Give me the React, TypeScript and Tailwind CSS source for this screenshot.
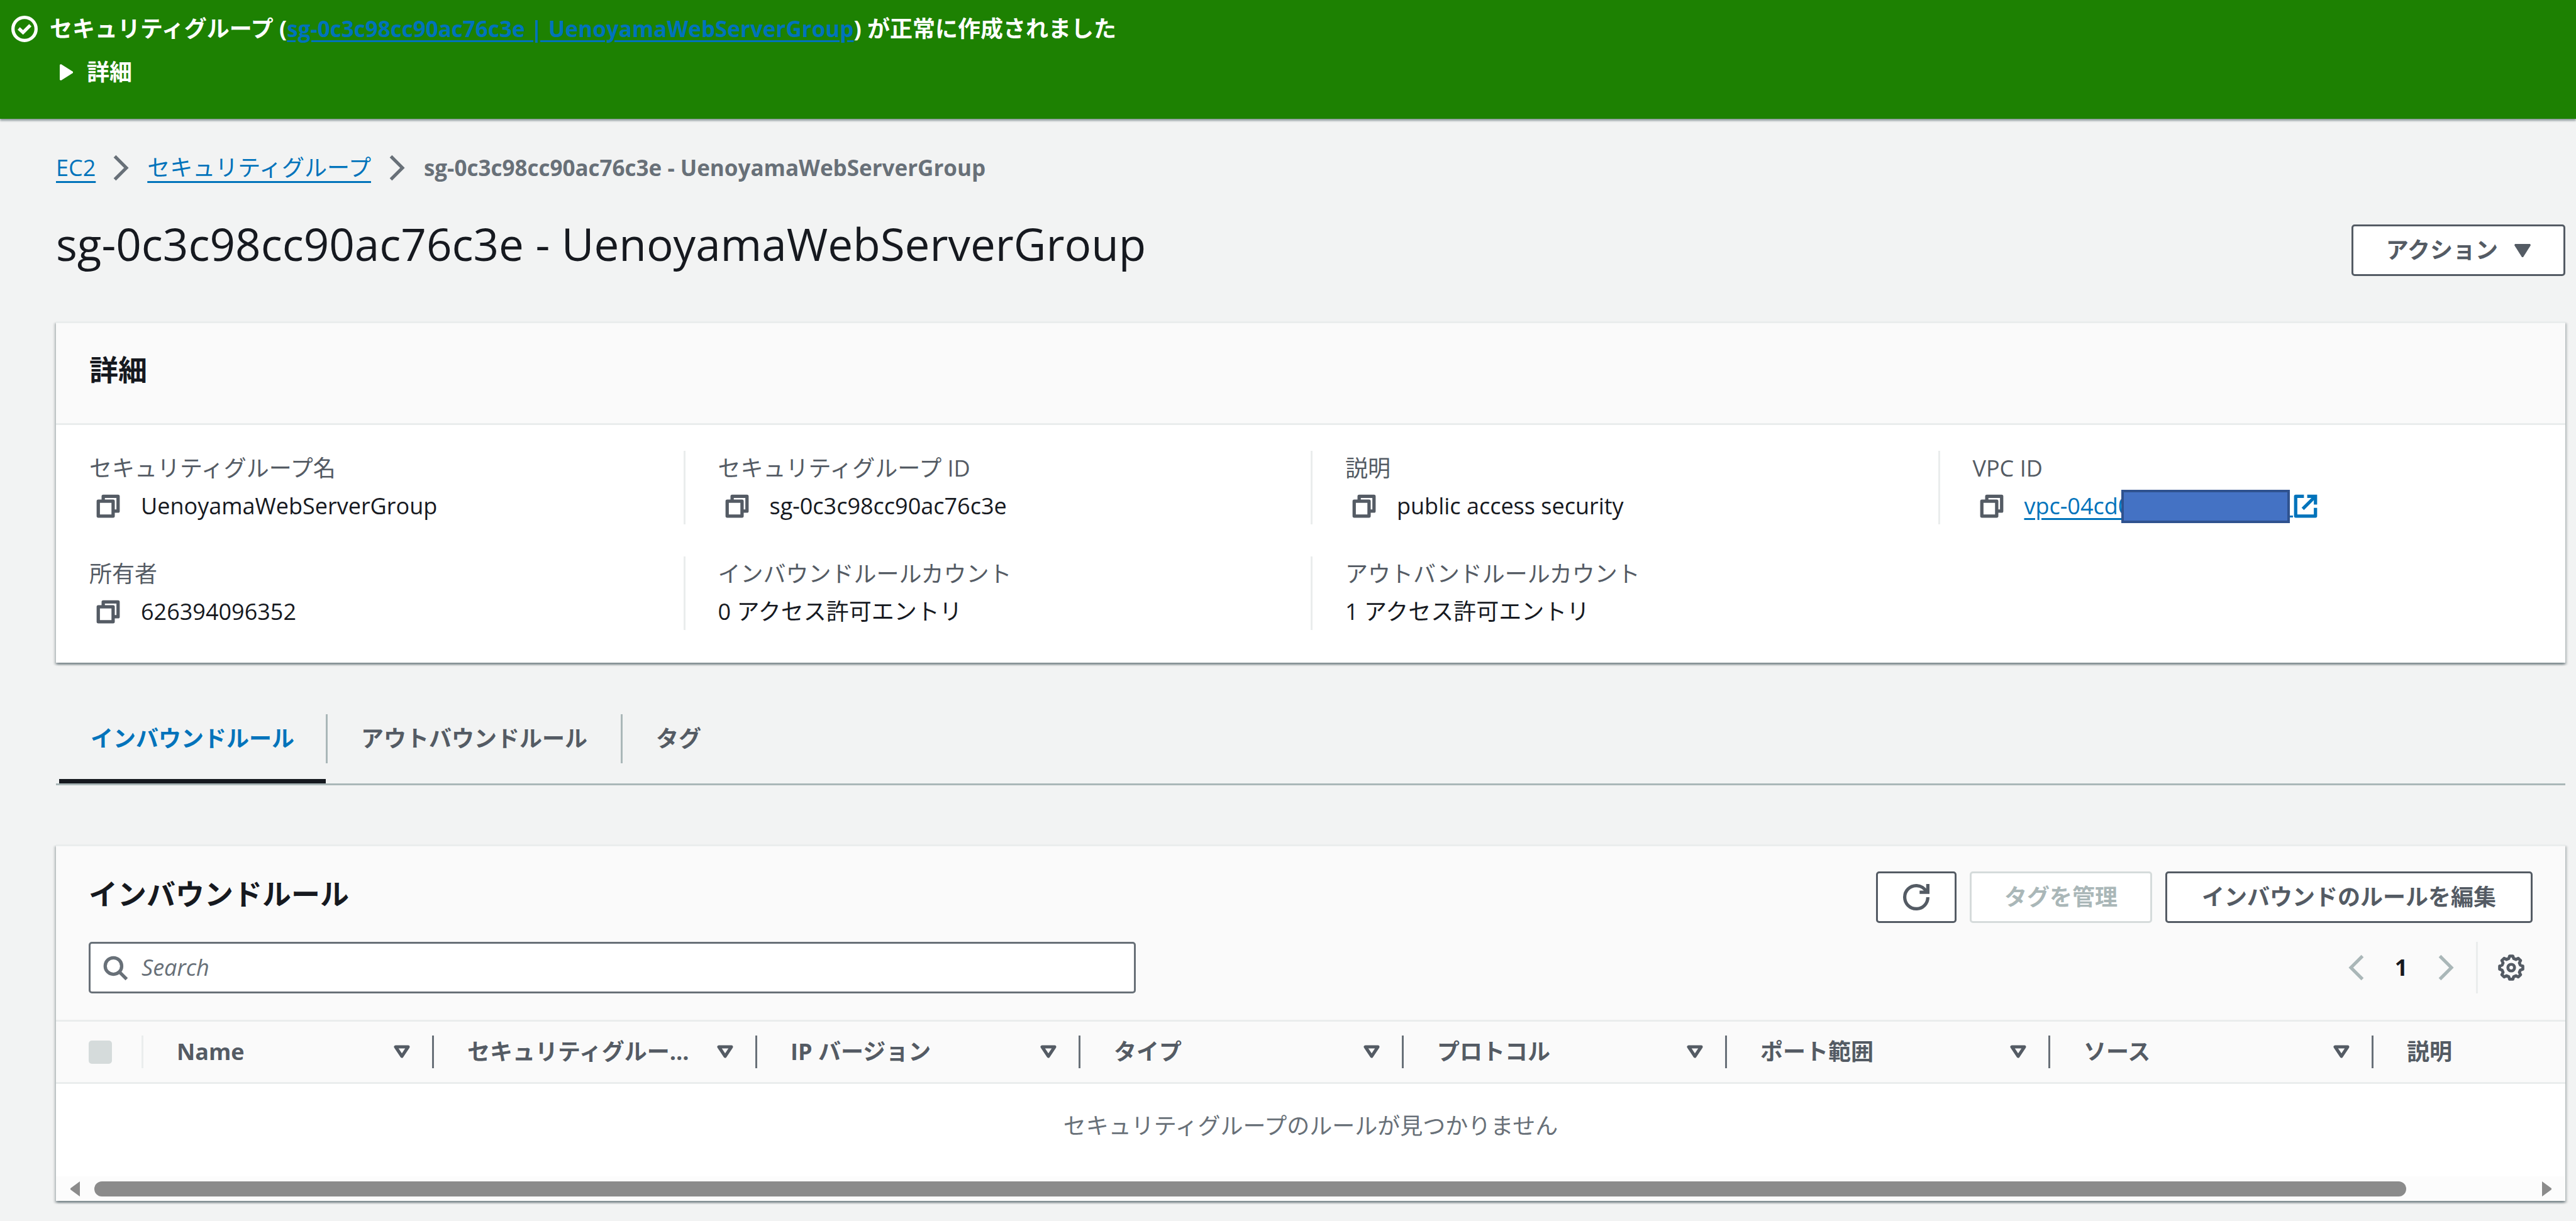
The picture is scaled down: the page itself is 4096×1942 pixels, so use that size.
import type { ReactNode } from "react";

type IconProps = { className?: string };

function StatusCheckIcon({ className = "" }: IconProps) {
  return (
    <svg viewBox="0 0 16 16" className={className} fill="none" stroke="currentColor" strokeWidth="2" aria-hidden="true">
      <circle cx="8" cy="8" r="7" />
      <path d="M4.5 7.7l2.6 2.4 4.4-4.3" />
    </svg>
  );
}

function ChevronIcon({ className = "" }: IconProps) {
  return (
    <svg viewBox="0 0 16 16" className={className} fill="none" stroke="currentColor" strokeWidth="2" aria-hidden="true">
      <path d="M4 1l7 7-7 7" />
    </svg>
  );
}

function CopyIcon({ className = "" }: IconProps) {
  return (
    <svg viewBox="0 0 16 16" className={className} fill="none" stroke="currentColor" strokeWidth="2" strokeLinejoin="round" aria-hidden="true">
      <path d="M2 5h9v9H2z" />
      <path d="M5 5V2h9v9h-3" />
    </svg>
  );
}

function ExternalIcon({ className = "" }: IconProps) {
  return (
    <svg viewBox="0 0 16 16" className={className} fill="none" stroke="currentColor" strokeWidth="2" aria-hidden="true">
      <path d="M9 2h5v5" />
      <path d="M6.3 9.7L14 2" />
      <path d="M14 9v5H2V2h5" strokeLinejoin="round" />
    </svg>
  );
}

function RefreshIcon({ className = "" }: IconProps) {
  return (
    <svg viewBox="0 0 16 16" className={className} fill="none" stroke="currentColor" strokeWidth="2" aria-hidden="true">
      <path d="M10 5h5V0" />
      <path d="M15 8a6.957 6.957 0 01-7 7 6.957 6.957 0 01-7-7 6.957 6.957 0 017-7 6.87 6.87 0 016.3 4" />
    </svg>
  );
}

function SearchIcon({ className = "" }: IconProps) {
  return (
    <svg viewBox="0 0 16 16" className={className} fill="none" stroke="currentColor" strokeWidth="2" aria-hidden="true">
      <circle cx="7" cy="7" r="5" />
      <path d="M15 15l-4.5-4.5" />
    </svg>
  );
}

const gearOutline = Array.from({ length: 8 })
  .flatMap((_, tooth) =>
    [
      [-15, 5.7],
      [-8, 7.1],
      [8, 7.1],
      [15, 5.7],
    ].map(([offset, radius]) => {
      const angle = ((tooth * 45 + offset) * Math.PI) / 180;
      return `${(8 + radius * Math.sin(angle)).toFixed(2)},${(8 - radius * Math.cos(angle)).toFixed(2)}`;
    }),
  )
  .join(" ");

function GearIcon({ className = "" }: IconProps) {
  return (
    <svg viewBox="0 0 16 16" className={className} fill="none" stroke="currentColor" strokeWidth="1.8" strokeLinejoin="round" aria-hidden="true">
      <circle cx="8" cy="8" r="2" />
      <polygon points={gearOutline} />
    </svg>
  );
}

function CaretDown({ className = "" }: IconProps) {
  return (
    <svg viewBox="0 0 26 21" className={className} fill="currentColor" aria-hidden="true">
      <path d="M1 0h24l1 2-12 19h-2L0 2z" />
    </svg>
  );
}

function SortIcon({ className = "" }: IconProps) {
  return (
    <svg viewBox="0 0 28 22" className={className} fill="none" stroke="currentColor" strokeWidth="5" strokeLinejoin="round" aria-hidden="true">
      <path d="M4 3h20L14 18z" />
    </svg>
  );
}

function Field({ label, first, children }: { label: string; first?: boolean; children: ReactNode }) {
  return (
    <div
      className={
        first
          ? "border-l-[3px] border-transparent pl-[50px]"
          : "border-l-[3px] border-[#eaeded] pl-[52px]"
      }
    >
      <dt className="h-[58px] leading-[56px] text-[#545b64]">{label}</dt>
      <dd className="flex h-[59px] items-center whitespace-nowrap">{children}</dd>
    </div>
  );
}

function CopyButton({ label }: { label: string }) {
  return (
    <button type="button" aria-label={label} className="mr-[31px] ml-[9px] text-[#545b64]">
      <CopyIcon className="size-[42px]" />
    </button>
  );
}

const columns = ["Name", "セキュリティグルー...", "IP バージョン", "タイプ", "プロトコル", "ポート範囲", "ソース"];

const panel =
  "border-t-[3px] border-[#eaeded] bg-white shadow-[0_3px_3px_0_rgba(0,28,36,0.3),3px_3px_3px_0_rgba(0,28,36,0.15),-3px_3px_3px_0_rgba(0,28,36,0.15)]";

const button =
  "flex h-[82px] items-center justify-center rounded-[5px] border-[3px] bg-white font-bold whitespace-nowrap";

function HeaderCell({ label }: { label: string }) {
  return (
    <th scope="col" className="p-0 text-left font-bold">
      <div className="flex h-[52px] items-center justify-between border-r-[3px] border-[#687078] pr-[34px] pl-[53px] whitespace-nowrap">
        {label}
        <SortIcon className="h-[22px] w-[28px] shrink-0" />
      </div>
    </th>
  );
}

export default function App() {
  return (
    <div className="min-h-screen bg-[#f2f3f3] font-['Open_Sans','Noto_Sans_CJK_JP',sans-serif] text-[36px] leading-[58px] text-[#16191f]">
      <section className="flex h-[189px] gap-[19px] bg-[#1d8102] pt-[17px] pl-[18px] font-bold text-white shadow-[0_3px_3px_0_rgba(0,28,36,0.4)]">
        <StatusCheckIcon className="mt-[8px] size-[42px] shrink-0" />
        <div>
          <p className="whitespace-nowrap">
            セキュリティグループ (
            <a href="#group" className="text-[35px] text-[#0073bb] underline underline-offset-[5px]">
              sg-0c3c98cc90ac76c3e | UenoyamaWebServerGroup
            </a>
            ) が正常に作成されました
          </p>
          <button type="button" className="mt-[11px] ml-[16px] flex items-center gap-[22px] font-bold">
            <svg viewBox="0 0 21 26" className="h-[26px] w-[21px]" fill="currentColor" aria-hidden="true">
              <path d="M0 1l2-1 19 12v2L2 26l-2-1z" />
            </svg>
            詳細
          </button>
        </div>
      </section>

      <div className="pr-[17px] pl-[89px]">
        <nav aria-label="breadcrumb" className="mt-[49px] flex h-[58px] items-center whitespace-nowrap">
          <a href="#ec2" className="text-[#0073bb] underline underline-offset-[8px]">EC2</a>
          <ChevronIcon className="mx-[20px] size-[42px] text-[#687078]" />
          <a href="#groups" className="text-[#0073bb] underline underline-offset-[8px]">セキュリティグループ</a>
          <ChevronIcon className="mx-[21px] size-[42px] text-[#687078]" />
          <span className="text-[35px] font-bold text-[#687078]">sg-0c3c98cc90ac76c3e - UenoyamaWebServerGroup</span>
        </nav>

        <header className="mt-[39px] flex items-start justify-between">
          <h1 className="text-[71px] leading-[106px] whitespace-nowrap">sg-0c3c98cc90ac76c3e - UenoyamaWebServerGroup</h1>
          <button type="button" className={`${button} mt-[22px] gap-[26px] border-[#545b64] px-[52px] text-[#545b64]`}>
            アクション
            <CaretDown className="h-[21px] w-[26px]" />
          </button>
        </header>

        <section className={`${panel} mt-[70px]`}>
          <h2 className="flex h-[162px] items-center border-b-[3px] border-[#eaeded] bg-[#fafafa] pb-[14px] pl-[53px] text-[46px] font-bold">
            詳細
          </h2>
          <dl className="grid grid-cols-4 gap-y-[51px] pt-[41px] pb-[52px]">
            <Field label="セキュリティグループ名" first>
              <CopyButton label="セキュリティグループ名をコピー" />
              UenoyamaWebServerGroup
            </Field>
            <Field label="セキュリティグループ ID">
              <CopyButton label="セキュリティグループ ID をコピー" />
              sg-0c3c98cc90ac76c3e
            </Field>
            <Field label="説明">
              <CopyButton label="説明をコピー" />
              public access security
            </Field>
            <Field label="VPC ID">
              <CopyButton label="VPC ID をコピー" />
              <a href="#vpc" className="relative flex items-center text-[#0073bb]">
                <span className="w-[426px] underline underline-offset-[6px]">vpc-04cd0</span>
                <span className="absolute top-[3px] left-[154px] h-[53px] w-[268px] border-[4px] border-[#2f528f] bg-[#4472c4]" />
                <span className="absolute bottom-[11px] left-[422px] h-[3px] w-[5px] bg-[#0073bb]" />
                <ExternalIcon className="size-[42px]" />
              </a>
            </Field>
            <Field label="所有者" first>
              <CopyButton label="所有者をコピー" />
              626394096352
            </Field>
            <Field label="インバウンドルールカウント">0 アクセス許可エントリ</Field>
            <Field label="アウトバンドルールカウント">1 アクセス許可エントリ</Field>
          </dl>
        </section>

        <div role="tablist" className="mt-[64px] flex h-[131px] border-b-[3px] border-[#aab7b8] font-bold text-[#545b64]">
          <button type="button" role="tab" aria-selected="true" className="relative ml-[5px] flex h-[128px] items-start pt-[18px] text-[#0073bb]">
            <span className="flex h-[78px] items-center border-r-[3px] border-[#aab7b8] px-[50px]">インバウンドルール</span>
            <span className="absolute right-[3px] bottom-0 left-0 h-[7px] bg-[#16191f]" />
          </button>
          <button type="button" role="tab" aria-selected="false" className="flex items-start pt-[18px]">
            <span className="flex h-[78px] items-center border-r-[3px] border-[#aab7b8] px-[53px]">アウトバウンドルール</span>
          </button>
          <button type="button" role="tab" aria-selected="false" className="flex items-start pt-[18px]">
            <span className="flex h-[78px] items-center px-[53px]">タグ</span>
          </button>
        </div>

        <section className={`${panel} mt-[94px]`}>
          <div className="bg-[#fafafa] px-[52px] pt-[40px] pb-[42px]">
            <div className="flex items-start justify-between">
              <h2 className="text-[46px] leading-[70px] font-bold">インバウンドルール</h2>
              <div className="flex gap-[21px]">
                <button type="button" aria-label="更新" className={`${button} w-[128px] border-[#545b64] text-[#545b64]`}>
                  <RefreshIcon className="size-[42px]" />
                </button>
                <button type="button" disabled className={`${button} border-[#d5dbdb] px-[52px] text-[#aab7b8]`}>
                  タグを管理
                </button>
                <button type="button" className={`${button} border-[#545b64] px-[55px] text-[#545b64]`}>
                  インバウンドのルールを編集
                </button>
              </div>
            </div>
            <div className="mt-[30px] flex items-center justify-between">
              <label className="flex h-[82px] w-3/7 items-center gap-[21px] rounded-[5px] border-[3px] border-[#687078] bg-white pl-[18px] text-[#687078]">
                <SearchIcon className="size-[42px] shrink-0" />
                <input
                  type="text"
                  aria-label="Search"
                  placeholder="Search"
                  className="w-full bg-transparent italic outline-none placeholder:text-[#687078]"
                />
              </label>
              <div className="flex h-[82px] items-center">
                <button type="button" aria-label="前のページ" disabled className="text-[#aab7b8]">
                  <ChevronIcon className="size-[42px] rotate-180" />
                </button>
                <button type="button" className="w-[102px] text-center font-bold">1</button>
                <button type="button" aria-label="次のページ" disabled className="text-[#aab7b8]">
                  <ChevronIcon className="size-[42px]" />
                </button>
                <div className="ml-[26px] flex h-[82px] items-center border-l-[3px] border-[#eaeded] pr-[13px] pl-[32px]">
                  <button type="button" aria-label="設定" className="text-[#545b64]">
                    <GearIcon className="size-[42px]" />
                  </button>
                </div>
              </div>
            </div>
          </div>

          <div className="[container-type:inline-size] overflow-hidden">
            <table className="w-[4224px] table-fixed border-collapse">
              <colgroup>
                <col className="w-[139px]" />
                <col className="w-[462px]" />
                <col className="w-[514px]" />
                <col className="w-[514px]" />
                <col className="w-[514px]" />
                <col className="w-[514px]" />
                <col className="w-[514px]" />
                <col className="w-[514px]" />
                <col />
              </colgroup>
              <thead className="border-y-[3px] border-[#eaeded] bg-[#fafafa] text-[#545b64]">
                <tr className="h-[99px]">
                  <th scope="col" className="p-0">
                    <div className="flex h-[52px] items-center border-r-[3px] border-[#eaeded] pl-[52px]">
                      <input
                        type="checkbox"
                        disabled
                        aria-label="すべて選択"
                        className="size-[37px] appearance-none rounded-[5px] bg-[#d5dbdb]"
                      />
                    </div>
                  </th>
                  {columns.map((label) => (
                    <HeaderCell key={label} label={label} />
                  ))}
                  <th scope="col" className="p-0 pl-[53px] text-left font-bold">説明</th>
                </tr>
              </thead>
              <tbody>
                <tr>
                  <td colSpan={9} className="p-0">
                    <div className="flex h-[147px] w-[100cqw] items-center justify-center pb-[14px] text-[#687078]">
                      セキュリティグループのルールが見つかりません
                    </div>
                  </td>
                </tr>
              </tbody>
            </table>
          </div>

          <div className="flex h-[39px] items-center bg-[#fcfcfc] pr-[22px] pl-[23px]">
            <svg viewBox="0 0 15 24" className="h-[24px] w-[15px]" fill="#8b8b8b" aria-hidden="true">
              <path d="M15 0v24L0 13v-2z" />
            </svg>
            <div className="mx-[23px] flex-1">
              <div className="h-[24px] w-[95%] rounded-full bg-[#8b8b8b]" />
            </div>
            <svg viewBox="0 0 15 24" className="h-[24px] w-[15px]" fill="#8b8b8b" aria-hidden="true">
              <path d="M0 0v24l15-11v-2z" />
            </svg>
          </div>
        </section>
      </div>
    </div>
  );
}
